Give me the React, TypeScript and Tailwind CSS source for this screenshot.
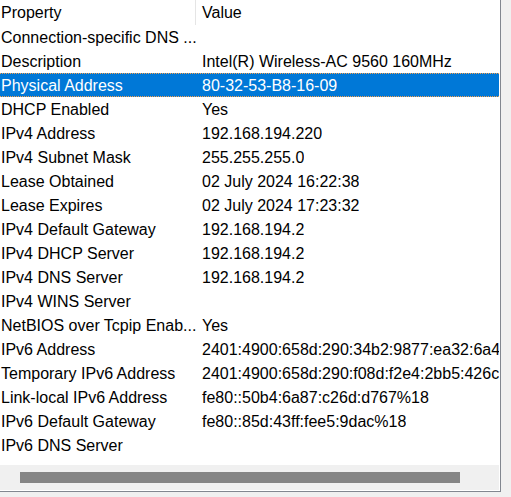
import React from 'react';

const rows: [string, string][] = [
  ['Connection-specific DNS ...', ''],
  ['Description', 'Intel(R) Wireless-AC 9560 160MHz'],
  ['Physical Address', '80-32-53-B8-16-09'],
  ['DHCP Enabled', 'Yes'],
  ['IPv4 Address', '192.168.194.220'],
  ['IPv4 Subnet Mask', '255.255.255.0'],
  ['Lease Obtained', '02 July 2024 16:22:38'],
  ['Lease Expires', '02 July 2024 17:23:32'],
  ['IPv4 Default Gateway', '192.168.194.2'],
  ['IPv4 DHCP Server', '192.168.194.2'],
  ['IPv4 DNS Server', '192.168.194.2'],
  ['IPv4 WINS Server', ''],
  ['NetBIOS over Tcpip Enab...', 'Yes'],
  ['IPv6 Address', '2401:4900:658d:290:34b2:9877:ea32:6a4'],
  ['Temporary IPv6 Address', '2401:4900:658d:290:f08d:f2e4:2bb5:426c'],
  ['Link-local IPv6 Address', 'fe80::50b4:6a87:c26d:d767%18'],
  ['IPv6 Default Gateway', 'fe80::85d:43ff:fee5:9dac%18'],
  ['IPv6 DNS Server', ''],
];

const SELECTED = 2;

export default function App() {
  return (
    <div
      className="h-[497px] w-[511px] overflow-hidden bg-[#f0f0f0] text-[16px] text-black"
      style={{ fontFamily: '"Liberation Sans", Arial, sans-serif' }}
    >
      <div className="flex h-[492px] w-[501px] flex-col border-b border-r border-[#828790] bg-white pb-[1px] pr-[1px]">
        <div className="flex-1 overflow-hidden">
          {/* header */}
          <div className="flex h-[25px] overflow-hidden leading-[26px] whitespace-nowrap">
            <div className="w-[196px] shrink-0 border-r border-[#e5e5e5] pl-[1px]">Property</div>
            <div className="pl-[6px]">Value</div>
          </div>
          {rows.map(([name, value], i) => (
            <div
              key={name}
              className={
                i === SELECTED
                  ? 'flex h-[24px] overflow-hidden border-y border-dotted border-[#f7a14d] bg-[#0078d7] leading-[24px] whitespace-nowrap text-white'
                  : 'flex h-[24px] overflow-hidden leading-[26px] whitespace-nowrap'
              }
            >
              <div className="w-[200px] shrink-0 overflow-hidden pl-[1px]">{name}</div>
              <div className="overflow-hidden pl-[2px]">{value}</div>
            </div>
          ))}
        </div>
        {/* horizontal scrollbar */}
        <div className="flex h-[25px] shrink-0 items-center bg-[#f0f0f0] pl-[20px]">
          <div className="h-[11px] w-[440px] bg-[#858585]" />
        </div>
      </div>
    </div>
  );
}
